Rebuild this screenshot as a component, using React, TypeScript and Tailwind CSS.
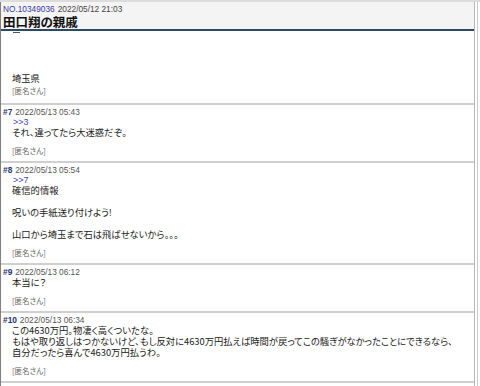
const cjk = "font-['Noto_Sans_CJK_JP',sans-serif] [font-feature-settings:'palt']";
const latin = "font-['Liberation_Sans',Arial,sans-serif]";

type Post = {
  no: number;
  date: string;
  quote?: string;
  lines: string[];
};

const posts: Post[] = [
  { no: 7, date: "2022/05/13 05:43", quote: ">>3", lines: ["それ、違ってたら大迷惑だぞ。"] },
  {
    no: 8,
    date: "2022/05/13 05:54",
    quote: ">>7",
    lines: ["確信的情報", "", "呪いの手紙送り付けよう!", "", "山口から埼玉まで石は飛ばせないから。。。"],
  },
  { no: 9, date: "2022/05/13 06:12", lines: ["本当に？"] },
  {
    no: 10,
    date: "2022/05/13 06:34",
    lines: [
      "この4630万円。物凄く高くついたな。",
      "もはや取り返しはつかないけど、もし反対に4630万円払えば時間が戻ってこの騒ぎがなかったことにできるなら、",
      "自分だったら喜んで4630万円払うわ。",
    ],
  },
  { no: 11, date: "2022/05/13 06:41", lines: ["そうだね"] },
];

function Name() {
  return (
    <div className={`${cjk} text-[7.5px] leading-[8px] text-[#666] ml-[9px]`}>[匿名さん]</div>
  );
}

function PostRow({ post }: { post: Post }) {
  return (
    <div className="border-t-2 border-[#cfcfcf] pl-[2px] pt-[2px] pb-[6px]">
      <div className={`${latin} text-[8.3px] leading-[10px] whitespace-nowrap`}>
        <span className="font-bold text-[#23346e]">#{post.no}</span>
        <span className="text-[#555] ml-[3px]">{post.date}</span>
      </div>
      {post.quote && (
        <div className={`${latin} text-[9px] leading-[10px] text-[#4545b5] ml-[10px]`}>{post.quote}</div>
      )}
      <div className={`${cjk} text-[9.3px] leading-[11px] text-[#222] ml-[9px] whitespace-nowrap`}>
        {post.lines.map((line, i) => (
          <div key={i} className="h-[11px]">
            {line}
          </div>
        ))}
      </div>
      <div className="mt-[9px]">
        <Name />
      </div>
    </div>
  );
}

export default function App() {
  return (
    <div className="h-[386px] w-[480px] overflow-hidden bg-white flex border-t-2 border-[#dcdcdc]">
      <div className="w-[475px] shrink-0 border-l border-l-[#808080] border-r border-r-[#b8b8b8]">
        {/* thread header */}
        <div className="bg-[#f4f4f4] border-b-2 border-b-[#2d4a63] pl-[2px] pt-[2px]">
          <div className={`${latin} text-[8.3px] leading-[10px] whitespace-nowrap`}>
            <span className="text-[#3a3aa8]">NO.10349036</span>
            <span className="text-[#444] ml-[3px]">2022/05/12 21:03</span>
          </div>
          <div className={`${cjk} text-[12.5px] leading-[15px] font-bold text-[#111]`}>田口翔の親戚</div>
        </div>

        {/* first post body */}
        <div className="pl-[2px] pb-[8px]">
          <div className="ml-[10px] mt-[1px] w-[7px] h-px bg-[#555]" />
          <div className={`${cjk} text-[9.3px] leading-[11px] text-[#222] ml-[9px] mt-[40px]`}>埼玉県</div>
          <div className="mt-[3px]">
            <Name />
          </div>
        </div>

        {posts.map((p) => (
          <PostRow key={p.no} post={p} />
        ))}
      </div>
      <div className="ml-[2px] w-px h-full bg-[#c8c8c8]" />
    </div>
  );
}
